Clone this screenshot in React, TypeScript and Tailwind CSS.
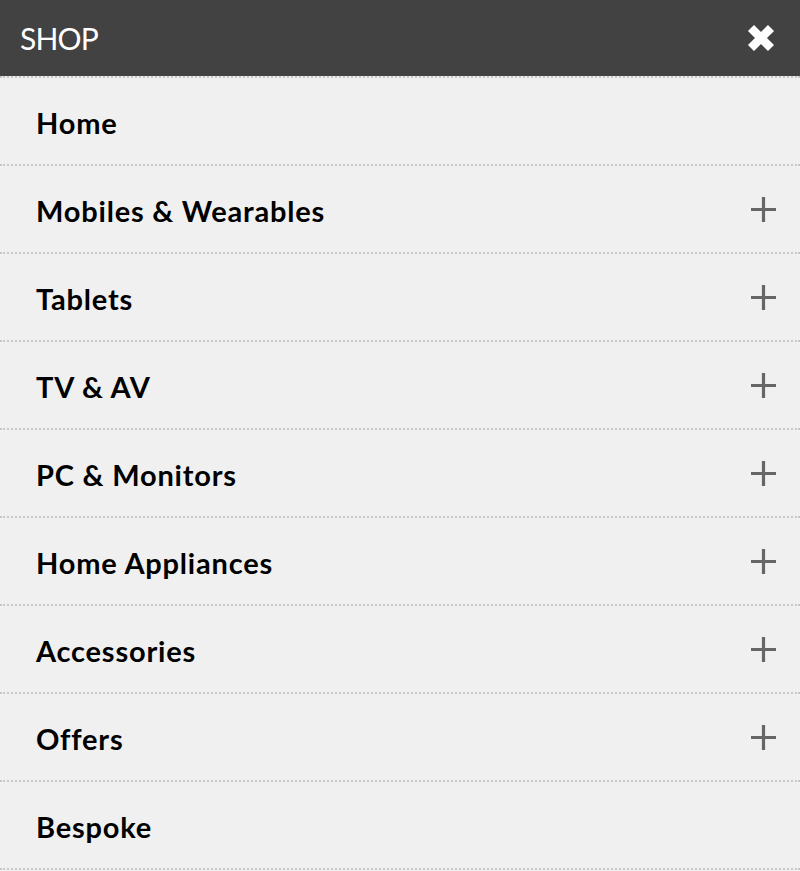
import React from "react";

const ITEMS = [
  { label: "Home", more: false },
  { label: "Mobiles & Wearables", more: true },
  { label: "Tablets", more: true },
  { label: "TV & AV", more: true },
  { label: "PC & Monitors", more: true },
  { label: "Home Appliances", more: true },
  { label: "Accessories", more: true },
  { label: "Offers", more: true },
  { label: "Bespoke", more: false },
];

function CloseIcon() {
  return (
    <svg width="28" height="28" viewBox="0 0 28 28" aria-hidden>
      <path d="M4 4L24 24M24 4L4 24" stroke="white" strokeWidth={8.5} />
    </svg>
  );
}

function PlusIcon() {
  return (
    <svg width="25" height="25" viewBox="0 0 25 25" aria-hidden>
      <path d="M12.5 0V25M0 12.5H25" stroke="#666666" strokeWidth={3.2} />
    </svg>
  );
}

export default function App() {
  return (
    <div className="w-[800px] min-h-[871px] bg-[#f0f0f0] font-['Lato',sans-serif]">
      <header className="h-[76px] bg-[#424242] flex items-center justify-between pl-5 pr-[25px]">
        <span className="text-white text-[30px] tracking-[-0.8px] leading-none">SHOP</span>
        <CloseIcon />
      </header>
      <ul className="border-t-2 border-dotted border-[#c8c8c8] bg-[#f0f0f0]">
        {ITEMS.map((it) => (
          <li
            key={it.label}
            className="h-[88px] border-b-2 border-dotted border-[#c8c8c8] flex items-center justify-between pl-[36px] pr-[24px]"
          >
            <span className="text-black font-bold text-[29px] tracking-[0.8px] leading-none pt-[2px]">
              {it.label}
            </span>
            {it.more && <PlusIcon />}
          </li>
        ))}
      </ul>
    </div>
  );
}
